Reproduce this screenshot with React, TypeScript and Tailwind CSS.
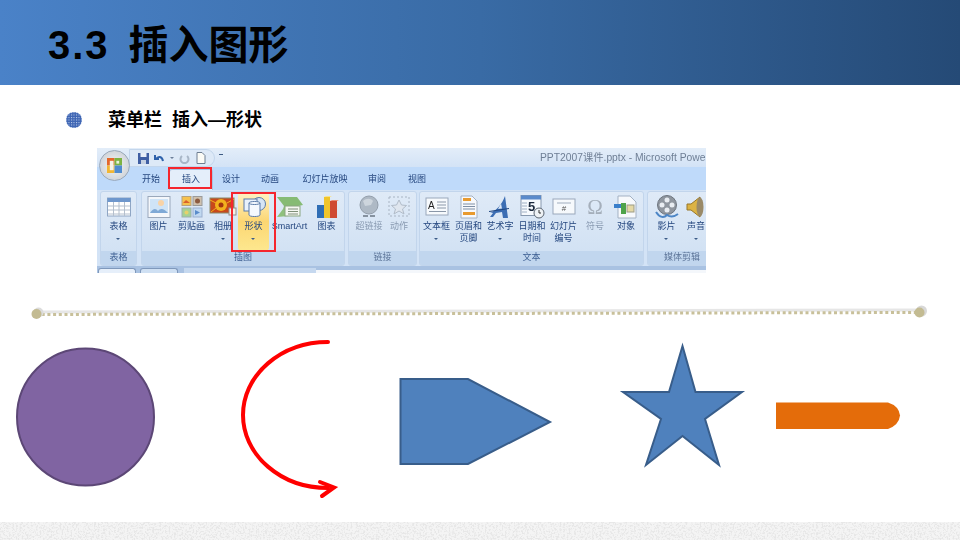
import type { ReactNode } from "react"

const cjk = "font-['Liberation_Sans','Noto_Sans_CJK_SC',sans-serif]"

function Icon({ w = 26, children }: { w?: number; children: ReactNode }) {
  return (
    <svg width={w} height="24" viewBox={`0 0 ${w} 24`} className="block shrink-0">
      {children}
    </svg>
  )
}

const TableIcon = (
  <Icon>
    <rect x="1.500" y="3" width="23" height="18" fill="#fff" stroke="#8fa6c4" />
    <rect x="1.500" y="3" width="23" height="4" fill="#6f97cc" />
    <path d="M2 11h22M2 15h22M2 19h22M7.500 7v14M13 7v14M18.500 7v14" stroke="#b4bfcd" fill="none" />
  </Icon>
)
const PictureIcon = (
  <Icon>
    <rect x="2" y="1.500" width="22" height="21" fill="#f4f7fb" stroke="#9aa8bb" />
    <rect x="4" y="4" width="18" height="14" fill="#cfe4f7" />
    <circle cx="15" cy="8" r="3" fill="#f9d3a6" />
    <path d="M4 18c3-5 6-5 8-2 2-3 6-3 10 2z" fill="#7fa9d6" />
  </Icon>
)
const ClipIcon = (
  <Icon>
    <rect x="3" y="1.500" width="9" height="9" fill="#f6c14d" stroke="#b7a27c" />
    <path d="M4 8l3-3 4 3z" fill="#d9622b" />
    <rect x="14" y="1.500" width="9" height="9" fill="#cfc0ad" stroke="#9a9a9a" />
    <circle cx="18.500" cy="6" r="2.500" fill="#8c5a40" />
    <rect x="3" y="13" width="9" height="9" fill="#a6d193" stroke="#9bb0b0" />
    <circle cx="7.500" cy="17.500" r="2" fill="#e7d16b" />
    <rect x="14" y="13" width="9" height="9" fill="#c0d8f0" stroke="#9bb0d0" />
    <path d="M16 15l5 2.500-5 2.500z" fill="#5a8ccb" />
  </Icon>
)
const AlbumIcon = (
  <Icon w={28}>
    <rect x="1" y="3" width="24" height="15" fill="#c8481a" stroke="#8a8a6a" />
    <circle cx="12" cy="10" r="6" fill="#f2b11d" />
    <circle cx="12" cy="10" r="2.500" fill="#a3350f" />
    <path d="M1 5l6 3M25 4l-7 4M2 17l5-4" stroke="#f2b11d" />
    <rect x="20" y="13" width="7" height="7" fill="#f3f1e6" stroke="#8e8e8e" />
  </Icon>
)
const ShapesIcon = (
  <Icon w={26}>
    <circle cx="18" cy="9" r="6.500" fill="#d6e5f5" stroke="#5a7ba8" />
    <rect x="3" y="4" width="13" height="12" fill="#e8f1fb" stroke="#5a7ba8" />
    <path d="M8 8c0-2 11-2 11 0v12c0 2-11 2-11 0z" fill="#f5f9fe" stroke="#5a7ba8" />
    <path d="M8 8c0 2 11 2 11 0" fill="none" stroke="#5a7ba8" />
  </Icon>
)
const SmartArtIcon = (
  <Icon w={28}>
    <path d="M1 2h20l6 8-5 1H8z" fill="#86bb74" />
    <path d="M1 22l6-8 1-3h5v10z" fill="#8fc07d" />
    <rect x="9" y="11" width="15" height="10" fill="#f5f7f2" stroke="#8aa580" />
    <path d="M12 14h10M12 16.500h10M12 19h10" stroke="#7e8f78" />
  </Icon>
)
const ChartIcon = (
  <Icon w={24}>
    <rect x="2" y="10" width="7" height="13" fill="#2f6eb5" />
    <rect x="9" y="2" width="6" height="21" fill="#f0c52b" />
    <rect x="15" y="6" width="7" height="17" fill="#cf4a33" />
    <path d="M9 2l2-1h6l-2 1z" fill="#f8e28a" />
    <path d="M15 6l2-1h7l-2 1z" fill="#e88a74" />
  </Icon>
)
const LinkIcon = (
  <Icon>
    <circle cx="13" cy="10" r="9" fill="#aeb9c5" stroke="#939eab" />
    <path d="M7 6c3-3 8-3 10 0l-2 4-6 1z" fill="#cdd5dd" />
    <path d="M7 21h5M14 21h5" stroke="#8692a0" strokeWidth="2" />
  </Icon>
)
const ActionIcon = (
  <Icon>
    <rect x="3" y="2" width="20" height="19" fill="none" stroke="#a8b4c3" strokeDasharray="2 2" />
    <path d="M13 5l2.500 5 5 .5-4 3.500 1.500 5-5-3-5 3 1.500-5-4-3.500 5-.5z" fill="#dfe6ef" stroke="#b1bcc9" />
  </Icon>
)
const TextBoxIcon = (
  <Icon>
    <rect x="2" y="3" width="22" height="17" fill="#f7fafd" stroke="#9aa8bb" />
    <text x="4" y="14" fontSize="10" fill="#222" fontFamily="Liberation Sans">A</text>
    <path d="M13 7h9M13 10h9M13 13h9M5 16.500h17" stroke="#8a97a8" />
  </Icon>
)
const HeaderIcon = (
  <Icon w={20}>
    <path d="M2 1h11l5 5v17H2z" fill="#f7f9fc" stroke="#a3b1c3" />
    <rect x="4" y="3" width="8" height="3" fill="#e89a2e" />
    <path d="M4 9h12M4 11.500h12M4 14h12" stroke="#7e8fa5" />
    <rect x="4" y="17" width="12" height="3" fill="#e89a2e" />
  </Icon>
)
const WordArtIcon = (
  <Icon>
    <path d="M3 17c6 0 12-8 15-16l3 22h-5l-1-6-6 1-3 4-3 0 3-4z" fill="#3b6db3" />
    <path d="M11 14l4-.5-1-5z" fill="#dce8f6" />
    <path d="M2 16.500l20-3" stroke="#1d447f" />
  </Icon>
)
const DateIcon = (
  <Icon w={26}>
    <rect x="2" y="0.500" width="20" height="20" fill="#f6f9fd" stroke="#8798ae" />
    <rect x="2" y="0.500" width="20" height="4" fill="#5a8acb" />
    <text x="9" y="16" fontSize="13" fontWeight="700" fill="#1d2a3d" fontFamily="Liberation Sans">5</text>
    <path d="M3 8h5M3 11h5M3 14h5M3 17h5" stroke="#a0b0c4" />
    <circle cx="20" cy="18" r="5" fill="#eef2f5" stroke="#5a6470" />
    <path d="M20 15v3h2" stroke="#333" fill="none" />
  </Icon>
)
const NumberIcon = (
  <Icon>
    <rect x="2" y="4" width="22" height="15" fill="#f6f9fc" stroke="#9aa8bb" />
    <path d="M6 8h14" stroke="#a0adbe" />
    <text x="13" y="16" fontSize="8" textAnchor="middle" fill="#555" fontFamily="Liberation Sans">#</text>
  </Icon>
)
const OmegaIcon = (
  <Icon>
    <text x="13" y="19" fontSize="21" textAnchor="middle" fill="#a5afbb" fontFamily="Liberation Serif">Ω</text>
  </Icon>
)
const ObjectIcon = (
  <Icon>
    <path d="M5 1h12l6 6v16H5z" fill="#f7f9fc" stroke="#a3b1c3" />
    <rect x="14" y="10" width="7" height="7" fill="#e5d9a6" stroke="#9b9b86" />
    <rect x="8" y="8" width="5" height="11" fill="#4ea34a" />
    <path d="M1 9h7v4H1z" fill="#3a7fcb" />
  </Icon>
)
const MovieIcon = (
  <Icon>
    <circle cx="13" cy="10" r="9.500" fill="#8f969f" stroke="#6d747d" />
    <circle cx="13" cy="5" r="2.500" fill="#e9edf2" />
    <circle cx="8" cy="10" r="2.500" fill="#e9edf2" />
    <circle cx="18" cy="10" r="2.500" fill="#e9edf2" />
    <circle cx="13" cy="15" r="2.500" fill="#e9edf2" />
    <path d="M2 17c4 6 8 6 11 3 3 2 7 2 11-1" fill="none" stroke="#4d86c6" strokeWidth="2" />
  </Icon>
)
const SoundIcon = (
  <Icon w={20}>
    <path d="M1 9h4l9-7v20l-9-7H1z" fill="#dcb344" stroke="#97772a" />
    <ellipse cx="14" cy="12" rx="3.500" ry="9.500" fill="#9a8a68" />
  </Icon>
)

type Btn = { w: number; lines: string[]; icon: ReactNode; arrow?: boolean; off?: boolean; hot?: boolean }

function RibbonButton({ w, lines, icon, arrow, off, hot }: Btn) {
  return (
    <div
      style={{ width: w }}
      className={`flex h-[59px] shrink-0 flex-col items-center pt-[3px] ${hot ? "rounded-sm bg-linear-to-b from-[#fff2c4] via-[#fcd672] to-[#fde88f]" : ""}`}
    >
      {icon}
      <div className={`mt-[2px] flex flex-col items-center whitespace-nowrap text-[9px] leading-[11.500px] ${off ? "text-[#8a9bb2]" : "text-[#25477f]"}`}>
        {lines.map((l) => (
          <span key={l}>{l}</span>
        ))}
        {arrow && <span className="mt-[5px] h-0 w-0 border-x-[2px] border-t-[2px] border-x-transparent border-t-[#3c5c88]" />}
      </div>
    </div>
  )
}

function Group({ w, label, ml, children, off }: { w: number; label: string; ml: number; children: ReactNode; off?: boolean }) {
  return (
    <div
      style={{ width: w, marginLeft: ml }}
      className="flex shrink-0 flex-col overflow-hidden rounded-[3px] border border-[#c2d5ec] bg-linear-to-b from-[#dfeaf7] to-[#cfe0f3]"
    >
      <div className="flex h-[59px]">{children}</div>
      <div className={`flex h-[15px] items-center justify-center bg-[#c1d6ee] text-[9px] ${off ? "text-[#5d7599]" : "text-[#3d5f92]"}`}>{label}</div>
    </div>
  )
}

function Ribbon() {
  const tabs = [
    ["开始", 36, false],
    ["插入", 44, true],
    ["设计", 36, false],
    ["动画", 42, false],
    ["幻灯片放映", 68, false],
    ["审阅", 36, false],
    ["视图", 44, false],
  ] as const
  return (
    <div className={`relative ml-[97px] mt-[17px] h-[125px] w-[609px] overflow-hidden blur-[0.35px] ${cjk}`}>
      {/* title row */}
      <div className="flex h-[19px] items-center bg-linear-to-b from-[#e3edf9] to-[#d3e3f6] pl-[443px] text-[10.300px] whitespace-nowrap text-[#6f7f95]">
        PPT2007课件.pptx - Microsoft Powe
      </div>

      {/* tabs */}
      <div className="flex h-[23px] items-end bg-[#bfdafa] pl-[36px] text-[9px] text-[#25477f]">
        {tabs.map(([name, w, active]) => (
          <div
            key={name}
            style={{ width: w }}
            className={`flex h-[21px] items-center justify-center ${active ? "rounded-t-[3px] border border-b-0 border-[#a9c3e2] bg-[#e4eefa]" : ""}`}
          >
            {name}
          </div>
        ))}
      </div>

      {/* groups */}
      <div className="flex h-[76px] bg-[#d3e3f6] pl-[3px] pt-[1px]">
        <Group w={37} ml={0} label="表格">
          <RibbonButton w={35} lines={["表格"]} icon={TableIcon} arrow />
        </Group>
        <Group w={204} ml={4} label="插图">
          <RibbonButton w={33} lines={["图片"]} icon={PictureIcon} />
          <RibbonButton w={33} lines={["剪贴画"]} icon={ClipIcon} />
          <RibbonButton w={30} lines={["相册"]} icon={AlbumIcon} arrow />
          <RibbonButton w={31} lines={["形状"]} icon={ShapesIcon} arrow hot />
          <RibbonButton w={41} lines={["SmartArt"]} icon={SmartArtIcon} />
          <RibbonButton w={33} lines={["图表"]} icon={ChartIcon} />
        </Group>
        <Group w={69} ml={3} label="链接" off>
          <RibbonButton w={40} lines={["超链接"]} icon={LinkIcon} off />
          <RibbonButton w={20} lines={["动作"]} icon={ActionIcon} off />
        </Group>
        <Group w={225} ml={2} label="文本">
          <RibbonButton w={33} lines={["文本框"]} icon={TextBoxIcon} arrow />
          <RibbonButton w={31} lines={["页眉和", "页脚"]} icon={HeaderIcon} />
          <RibbonButton w={32} lines={["艺术字"]} icon={WordArtIcon} arrow />
          <RibbonButton w={32} lines={["日期和", "时间"]} icon={DateIcon} />
          <RibbonButton w={31} lines={["幻灯片", "编号"]} icon={NumberIcon} />
          <RibbonButton w={32} lines={["符号"]} icon={OmegaIcon} off />
          <RibbonButton w={30} lines={["对象"]} icon={ObjectIcon} />
        </Group>
        <Group w={70} ml={3} label="媒体剪辑" off>
          <RibbonButton w={37} lines={["影片"]} icon={MovieIcon} arrow />
          <RibbonButton w={22} lines={["声音"]} icon={SoundIcon} arrow />
        </Group>
      </div>

      {/* bottom band, the pane tabs are cut off here */}
      <div className="flex h-[7px] items-end bg-[#a9c2e2] pl-[1px]">
        <div className="h-[5px] w-[38px] rounded-t-[3px] border border-b-0 border-[#7f98bb] bg-[#e6effa]" />
        <div className="ml-[4px] h-[5px] w-[38px] rounded-t-[3px] border border-b-0 border-[#7f98bb] bg-[#cfe0f3]" />
        <div className="ml-[6px] h-[5px] w-[132px] bg-[#c5d8ef]" />
        <div className="h-[3px] w-[391px] bg-[#f4f7fb]" />
      </div>

      {/* office button and quick access bar */}
      <div className="absolute left-[32px] top-[1px] flex h-[18px] w-[86px] items-center gap-[5px] rounded-r-full border border-[#c3d6ec] bg-[#dde9f7] pl-[8px]">
        <svg width="11" height="11" viewBox="0 0 11 11">
          <rect width="11" height="11" fill="#3f5ea3" />
          <rect x="2.500" y="0" width="6" height="4" fill="#e8eef8" />
          <rect x="3" y="7" width="5" height="4" fill="#c5d0e2" />
        </svg>
        <svg width="11" height="11" viewBox="0 0 11 11">
          <path d="M1 2v4h4M2 6c2-3 6-3 7 2" fill="none" stroke="#2f62ab" strokeWidth="2" />
        </svg>
        <span className="h-0 w-0 border-x-[2px] border-t-[2px] border-x-transparent border-t-[#6c7f99]" />
        <svg width="11" height="11" viewBox="0 0 11 11">
          <path d="M3 3a4 4 0 1 0 5 0" fill="none" stroke="#a8b6c7" strokeWidth="2" />
        </svg>
        <svg width="11" height="12" viewBox="0 0 11 12">
          <path d="M2 .5h5l3 3v8H2z" fill="#fbfbf6" stroke="#6f7f92" />
        </svg>
      </div>
      <span className="absolute left-[122px] top-[6px] h-[5px] w-[4px] border-t border-[#3d5a82]" />
      <div className="absolute left-[2px] top-[2px] h-[31px] w-[31px] rounded-full border border-[#9aa9bb] bg-radial from-[#f7f7f7] to-[#c2c8cf] p-[7px]">
        <svg viewBox="0 0 16 16" className="block h-full w-full">
          <rect x="0" y="0" width="8" height="8" fill="#e4672b" />
          <rect x="8" y="0" width="8" height="8" fill="#7cb342" />
          <rect x="0" y="8" width="8" height="8" fill="#f2b632" />
          <rect x="8" y="8" width="8" height="8" fill="#4f8bd0" />
          <rect x="3" y="3" width="4" height="10" fill="#f7f3e8" />
          <rect x="10" y="3" width="3" height="3" fill="#e9f2dc" />
        </svg>
      </div>

      {/* red marks from the slide */}
      <div className="absolute left-[71px] top-[19px] h-[22px] w-[44px] border-2 border-[#f5262e]" />
      <div className="absolute left-[134px] top-[44px] h-[60px] w-[45px] border-2 border-[#f5262e]" />
    </div>
  )
}

function Shapes() {
  return (
    <svg width="960" height="215" viewBox="0 300 960 215" className="mt-[27px] block">
      {/* bead line */}
      <line x1="36" y1="312" x2="920" y2="310" stroke="#e6e6e6" strokeWidth="3" />
      <line x1="36" y1="314.500" x2="920" y2="312.500" stroke="#c8c09a" strokeWidth="3" strokeDasharray="3 2.700" />
      <circle cx="38.500" cy="312.500" r="5" fill="#dcdcdc" />
      <circle cx="36.500" cy="314" r="5" fill="#c3bb92" />
      <circle cx="921.500" cy="311" r="5.500" fill="#d8d8d8" />
      <circle cx="919.500" cy="312.500" r="5" fill="#c3bb92" />

      <circle cx="85.500" cy="417" r="68.500" fill="#8064a2" stroke="#5c4776" strokeWidth="2" />

      <path d="M328 342A85 73 0 0 0 243 415A85 73 0 0 0 328 488" fill="none" stroke="#ff0000" strokeWidth="4" strokeLinecap="round" />
      <path d="M320 482L334 487.500L322 496" fill="none" stroke="#ff0000" strokeWidth="4" strokeLinecap="round" />

      <polygon points="400.500,379 468,379 550,422 468,464 400.500,464" fill="#4f81bd" stroke="#385d8a" strokeWidth="2" />
      <polygon
        points="682.500,346 695.500,392 742,392 705,419 719,465 682.500,436 646,465 661,419 623,392 669,392"
        fill="#4f81bd"
        stroke="#385d8a"
        strokeWidth="2"
      />
      <path d="M776 402.500H888Q899 406 900 415.500Q899 425 888 429H776z" fill="#e46c0a" />
    </svg>
  )
}

export default function App() {
  return (
    <div className={`relative flex h-[540px] w-[960px] flex-col overflow-hidden bg-white ${cjk}`}>
      <header className="flex h-[85px] shrink-0 items-center bg-linear-to-r from-[#4a82c8] via-[#396ba5] to-[#254a76] pl-[48px] pt-[5px] text-[40px] font-bold text-black">
        <span className="tracking-[2px]">3.3</span>
        <span className="ml-[19px]">插入图形</span>
      </header>

      <div className="mt-[23px] flex h-[23px] items-center pl-[66px] text-[18px] font-bold leading-none text-black">
        <svg width="16" height="16" viewBox="0 0 16 16" className="shrink-0">
          <defs>
            <pattern id="dots" width="2.500" height="2.500" patternUnits="userSpaceOnUse">
              <rect width="2.500" height="2.500" fill="#3f66b4" />
              <rect width="1" height="1" fill="#c7d4ee" />
            </pattern>
          </defs>
          <circle cx="8" cy="8" r="8" fill="url(#dots)" />
        </svg>
        <span className="ml-[26px]">菜单栏</span>
        <span className="ml-[10px]">插入—形状</span>
      </div>

      <Ribbon />
      <Shapes />

      <svg width="960" height="18" className="absolute bottom-0 left-0 block">
        <filter id="grain">
          <feTurbulence type="fractalNoise" baseFrequency="0.55" numOctaves="3" seed="4" />
          <feColorMatrix values="0 0 0 0 0.8  0 0 0 0 0.8  0 0 0 0 0.8  0 0 0 5 -2.300" />
        </filter>
        <rect width="960" height="18" fill="#f4f4f4" />
        <rect width="960" height="18" filter="url(#grain)" />
      </svg>
    </div>
  )
}
